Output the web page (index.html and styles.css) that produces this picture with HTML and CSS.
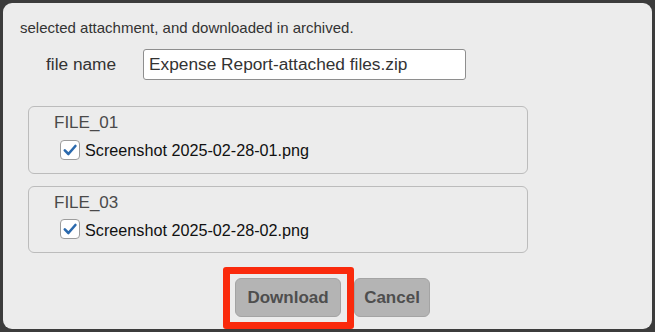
FILE: index.html
```html
<!DOCTYPE html>
<html>
<head>
<meta charset="utf-8">
<link rel="stylesheet" href="styles.css">
</head>
<body>
<div class="dialog">
  <p class="intro">selected attachment, and downloaded in archived.</p>
  <div class="name-row">
    <label class="name-label">file name</label>
    <div class="name-input">Expense Report-attached files.zip</div>
  </div>
  <div class="group">
    <div class="group-title">FILE_01</div>
    <div class="check-row">
      <span class="check"><svg viewBox="0 0 20 20" width="20" height="20"><path d="M4.8 10.4 L8.4 14 L15.4 6" fill="none" stroke="#2a69ad" stroke-width="2.6" stroke-linecap="round" stroke-linejoin="round"/></svg></span>
      <span class="check-text">Screenshot 2025-02-28-01.png</span>
    </div>
  </div>
  <div class="group">
    <div class="group-title">FILE_03</div>
    <div class="check-row">
      <span class="check"><svg viewBox="0 0 20 20" width="20" height="20"><path d="M4.8 10.4 L8.4 14 L15.4 6" fill="none" stroke="#2a69ad" stroke-width="2.6" stroke-linecap="round" stroke-linejoin="round"/></svg></span>
      <span class="check-text">Screenshot 2025-02-28-02.png</span>
    </div>
  </div>
  <div class="actions">
    <div class="highlight"><button class="btn btn-download">Download</button></div>
    <button class="btn btn-cancel">Cancel</button>
  </div>
</div>
</body>
</html>
```
FILE: styles.css
```css
html, body {
  margin: 0;
  padding: 0;
  background: #3c3c3c;
}
body {
  padding: 3px;
  width: 655px;
  height: 332px;
  box-sizing: border-box;
  overflow: hidden;
  font-family: "Liberation Sans", Arial, sans-serif;
}
.dialog {
  width: 649px;
  height: 326px;
  background: #ececec;
  border-radius: 9px;
  box-sizing: border-box;
  padding: 16px 0 0 0;
  display: flex;
  flex-direction: column;
}
.intro {
  margin: 0 0 0 17px;
  font-size: 15px;
  line-height: 17px;
  color: #333;
}
.name-row {
  margin-top: 13px;
  display: flex;
  align-items: center;
  padding-left: 43px;
}
.name-label {
  font-size: 17.3px;
  color: #333;
  width: 97px;
}
.name-input {
  width: 323px;
  height: 31px;
  box-sizing: border-box;
  border: 1px solid #8e8e8e;
  border-radius: 3px;
  background: #fff;
  font-size: 17.3px;
  color: #333;
  padding-left: 5px;
  display: flex;
  align-items: center;
}
.group {
  margin: 26px 0 0 25px;
  width: 500px;
  height: 68px;
  box-sizing: border-box;
  border: 1px solid #bcbcbc;
  border-radius: 6px;
  padding: 6px 0 0 25px;
}
.group + .group {
  margin-top: 12px;
}
.group-title {
  font-size: 17px;
  line-height: 20px;
  color: #4a4a4a;
}
.check-row {
  margin: 6px 0 0 6px;
  display: flex;
  align-items: center;
  height: 21px;
}
.check {
  width: 20px;
  height: 20px;
  box-sizing: border-box;
  border: 1px solid #9c9c9c;
  border-radius: 4px;
  background: #fff;
  display: flex;
  align-items: center;
  justify-content: center;
  margin-right: 5px;
}
.check svg {
  display: block;
  flex: none;
}
.check-text {
  font-size: 16.2px;
  color: #111;
  position: relative;
  top: 1px;
}
.actions {
  margin-top: 14px;
  display: flex;
  justify-content: center;
  align-items: flex-start;
  padding-right: 2px;
}
.highlight {
  border: 7px solid #fa2a0c;
  border-radius: 3px;
  padding: 4px 6px 5px 5px;
}
.btn {
  display: block;
  height: 39px;
  box-sizing: border-box;
  border: 1px solid #a4a4a4;
  border-radius: 6px;
  background: #b4b4b4;
  color: #4e4e4e;
  font-family: "Liberation Sans", Arial, sans-serif;
  font-weight: bold;
  font-size: 17px;
  padding: 0;
}
.btn-download {
  width: 106px;
}
.btn-cancel {
  width: 76px;
  margin-top: 11px;
}
```
